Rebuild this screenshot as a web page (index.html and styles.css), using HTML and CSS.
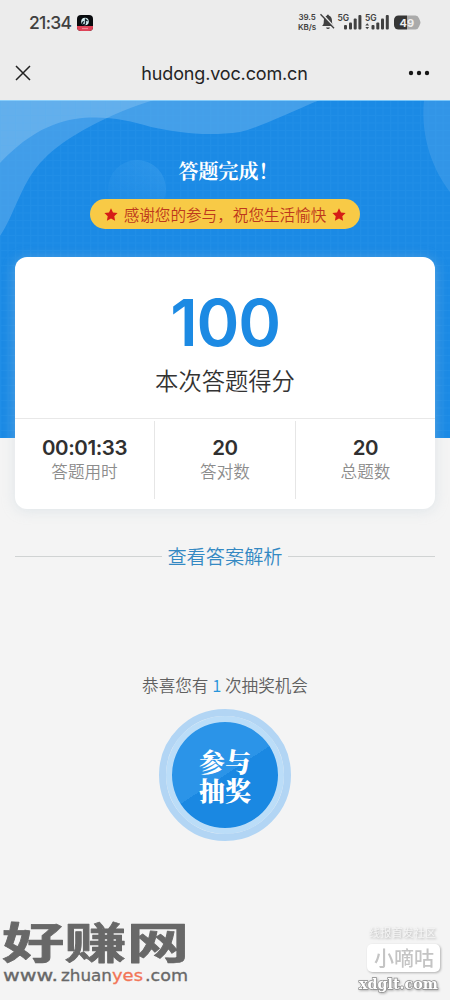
FILE: index.html
```html
<!DOCTYPE html>
<html lang="zh-CN">
<head>
<meta charset="utf-8">
<meta name="viewport" content="width=device-width, initial-scale=1">
<title>hudong.voc.com.cn</title>
<link rel="stylesheet" href="styles.css">
</head>
<body>
<div class="screen">
  <header class="top">
    <div class="status">
      <span class="clock">21:34</span>
      <svg class="app" width="16" height="16" viewBox="0 0 16 16"><rect width="16" height="16" rx="4" fill="#090b0e"/><path d="M0 11h16v1a4 4 0 0 1-4 4H4a4 4 0 0 1-4-4z" fill="#df4358"/><circle cx="8" cy="6.5" r="3.8" fill="#d3eef0"/><path d="M8.5 3.5v4.7a1.5 1.5 0 1 1-1.4-1.5M8.5 4q.6 1.7 2.2 1.8" fill="none" stroke="#17242e" stroke-width="1.3"/><path d="M5 13.5h6" stroke="#f28492" stroke-width="1.2"/></svg>
      <span class="speed">39.5<br>KB/s</span>
      <svg class="signals" width="104" height="20" viewBox="0 0 104 20">
        <path d="M3 14c1.6-1.2 1.8-2.7 1.8-5 0-3 1.4-4.8 3.2-5.4V2.8h1.8v.8c2.2.7 3.2 2.5 3.2 5.4 0 2.4.3 3.8 1.9 5zM7 15.4h4q-.5 1.5-2 1.5t-2-1.5z" fill="#404040"/><path d="M2.8 1.7 16 16" stroke="#ececec" stroke-width="1.8"/><path d="M1.5 2.3 15 16.2" stroke="#404040" stroke-width="1.4"/>
        <g class="five-g"><text x="18.5" y="8.6">5G</text><text x="46" y="8.6">5G</text></g>
        <g fill="#404040"><rect x="25" y="13" width="3" height="4.5" rx="1"/><rect x="30" y="10.5" width="3" height="7" rx="1"/><rect x="34.700" y="6.500" width="3" height="11" rx="1"/><rect x="39.400" y="3" width="3" height="14.500" rx="1"/><rect x="52.500" y="13" width="3" height="4.500" rx="1"/><rect x="57.300" y="10.500" width="3" height="7" rx="1"/><rect x="62" y="6.500" width="3" height="11" rx="1"/><rect x="66.800" y="3" width="3" height="14.500" rx="1"/><path d="m46.300 13.500 1.900-2.300 1.900 2.300zm0 1.400 1.900 2.400 1.900-2.400z"/></g>
        <path d="M79.500 3.500H88v14h-8.500a4.500 4.500 0 0 1-4.500-4.500V8a4.500 4.500 0 0 1 4.500-4.500z" fill="#353535"/><path d="M88 3.500h8.500q2.500 0 3.600 3l1.200 3q.4 1 0 2l-1.200 3q-1.100 3-3.600 3H88z" fill="#aaa"/><text class="battery" x="80.500" y="14.600">49</text>
      </svg>
    </div>
    <nav class="nav">
      <svg width="18" height="18" viewBox="0 0 18 18"><path d="M2 2 16 16M16 2 2 16" stroke="#222" stroke-width="1.5"/></svg>
      <span class="url">hudong.voc.com.cn</span>
      <svg width="22" height="6" viewBox="0 0 22 6" fill="#171717"><circle cx="3" cy="3" r="2.200"/><circle cx="11" cy="3" r="2.200"/><circle cx="19" cy="3" r="2.200"/></svg>
    </nav>
  </header>
  <section class="hero">
    <svg class="hero-art" width="450" height="338" viewBox="0 0 450 338">
      <defs>
        <pattern id="grid" width="7.500" height="7.500" patternUnits="userSpaceOnUse"><path d="M0 .5h7.500M.5 0v7.500" stroke="#4aa9f4" stroke-opacity=".11"/></pattern>
        <linearGradient id="orb" x1="0" y1=".3" x2="1" y2=".5"><stop stop-color="#46a5ef" stop-opacity=".2"/><stop offset="1" stop-color="#56adf0" stop-opacity=".4"/></linearGradient>
        <linearGradient id="fade" x1="0" x2="0" y1="60" y2="118" gradientUnits="userSpaceOnUse"><stop stop-color="#fff"/><stop offset="1" stop-color="#222"/></linearGradient>
        <mask id="orb-mask"><rect width="450" height="338" fill="url(#fade)"/></mask>
      </defs>
      <rect width="450" height="338" fill="#1b8ae5"/>
      <path d="M0 0H320C290 12 259 28 240 32C206 37 174 32 151 27C127 20 103 15 75 19C43 24 19 43 0 63Z" fill="#fff" fill-opacity=".18"/>
      <path d="M0 0H154C112 12 62 39 44 59C22 80 15 114 0 136Z" fill="#fff" fill-opacity=".17"/>
      <path d="M424 0C420 38 434 72 450 92V0Z" fill="#fff" fill-opacity=".1"/>
      <circle cx="137" cy="89" r="29" fill="url(#orb)" mask="url(#orb-mask)"/>
      <rect width="450" height="338" fill="url(#grid)"/>
      <path d="M0 .5h450" stroke="#9cdcff" stroke-opacity=".7"/>
    </svg>
    <h1 class="title">答题完成！</h1>
    <div class="ribbon">
      <svg width="14" height="13" viewBox="0 0 14 13"><path d="m7 .3 2 4.100 4.600.6-3.300 3.200.8 4.500L7 10.500l-4.100 2.200.8-4.500L.4 5 5 4.400z" fill="#d51c16"/></svg>
      <span>感谢您的参与，祝您生活愉快</span>
      <svg width="14" height="13" viewBox="0 0 14 13"><path d="m7 .3 2 4.100 4.600.6-3.300 3.200.8 4.500L7 10.500l-4.100 2.200.8-4.500L.4 5 5 4.400z" fill="#d51c16"/></svg>
    </div>
    <div class="card">
      <div class="score">100</div>
      <div class="score-label">本次答题得分</div>
      <div class="stats">
        <div class="stat"><b>00:01:33</b><span>答题用时</span></div>
        <div class="stat"><b>20</b><span>答对数</span></div>
        <div class="stat"><b>20</b><span>总题数</span></div>
      </div>
    </div>
  </section>
  <main class="below">
    <a class="review"><span>查看答案解析</span></a>
    <p class="chance">恭喜您有 <em>1</em> 次抽奖机会</p>
    <button class="draw"><span>参与<br>抽奖</span></button>
  </main>
  <footer class="marks">
    <svg class="mark-left" width="200" height="90" viewBox="0 0 200 90">
      <text class="brand" x="2" y="70.500" transform="scale(1 .7)" textLength="187" lengthAdjust="spacingAndGlyphs">好赚网</text>
      <g class="site">
        <text x="3" y="71" textLength="55" lengthAdjust="spacingAndGlyphs">www.</text>
        <text x="61" y="71" textLength="51" lengthAdjust="spacingAndGlyphs">zhuan</text>
        <text class="accent" x="112" y="71" textLength="31" lengthAdjust="spacingAndGlyphs">yes</text>
        <text x="145" y="71" textLength="43" lengthAdjust="spacingAndGlyphs">.com</text>
      </g>
    </svg>
    <svg class="mark-right" width="110" height="85" viewBox="0 0 110 85">
      <text class="mark-top" x="29" y="22" textLength="67">线报首发社区</text>
      <rect class="plate" x="27" y="29" width="73" height="28" rx="5"/>
      <text class="mark-name" x="34" y="50.500" textLength="60">小嘀咕</text>
      <text class="mark-site" x="19" y="74" textLength="79" lengthAdjust="spacingAndGlyphs">xdglt.com</text>
    </svg>
  </footer>
</div>
</body>
</html>
```
FILE: styles.css
```css
* { box-sizing: border-box; }
body { margin: 0; font-family: "Noto Sans", "Noto Sans CJK SC", sans-serif; }
.screen { width: 450px; height: 1000px; background: #f4f4f4; display: flex; flex-direction: column; overflow: hidden; }
.top { height: 100px; background: #ececec; flex: none; }
.status { height: 46px; display: flex; align-items: center; padding: 0 27px 0 29px; color: #404040; }
.clock { font: 500 17.5px/20px Inter, sans-serif; letter-spacing: -.7px; width: 48px; }
.speed { margin-left: auto; margin-right: 3px; margin-top: -3px; font: 600 8px/10px Inter, sans-serif; text-align: center; letter-spacing: -.1px; }
.signals { overflow: visible; margin-top: -2px; }
.five-g { font: 600 8.5px Inter, sans-serif; fill: #404040; }
.battery { font: 700 11px Inter, sans-serif; fill: #eee; }
.nav { height: 54px; padding: 0 20px 0 14px; display: flex; align-items: center; justify-content: space-between; }
.url { font: 400 18px/24px Inter, sans-serif; color: #242424; letter-spacing: -.15px; margin-left: 9px; margin-top: 1px; }
.hero { position: relative; flex: none; height: 338px; display: flex; flex-direction: column; align-items: center; }
.hero-art { position: absolute; inset: 0; }
.title { position: relative; margin: 56px 0 0 7px; height: 30px; font: 700 20px/30px "Noto Serif CJK SC", "Noto Sans CJK SC", serif; color: #fff; }
.ribbon { position: relative; width: 270px; height: 30px; margin-top: 13px; border-radius: 15px; background: #f8ca46; color: #bd381c; display: flex; align-items: center; justify-content: space-between; padding: 0 14px; font: 350 15.6px/30px "Noto Sans CJK SC", sans-serif; }
.card { position: relative; flex: none; width: 420px; height: 252px; margin-top: 28px; background: #fff; border-radius: 12px; box-shadow: 0 2px 13px rgba(190, 205, 216, .38); }
.score { height: 78px; margin-top: 27px; text-align: center; color: #1c8ae3; font: 600 65px/78px Inter, sans-serif; letter-spacing: -1.2px; }
.score-label { height: 36px; text-align: center; font: 350 23.3px/36px "Noto Sans CJK SC", sans-serif; color: #333; }
.stats { height: 82px; margin-top: 20px; border-top: 1px solid #e8e8e8; display: grid; grid-template-columns: 139px 141px 140px; padding-top: 2px; }
.stat { display: flex; flex-direction: column; align-items: center; height: 78px; padding-top: 13px; }
.stat + .stat { border-left: 1px solid #e6e6e6; }
.stat b { font: 600 20.5px/26px Inter, sans-serif; color: #303030; letter-spacing: -.4px; position: relative; top: 1px; }
.stat span { font: 350 16.6px/23px "Noto Sans CJK SC", sans-serif; color: #8c8c8c; }
.below { display: flex; flex-direction: column; align-items: center; padding-top: 101px; }
.review { width: 420px; height: 34px; display: flex; align-items: center; gap: 5px; color: #3489c3; font: 350 19.2px/34px "Noto Sans CJK SC", sans-serif; }
.review::before, .review::after { content: ""; flex: 1; height: 1px; background: #d0d3d3; }
.chance { margin: 99px 0 0; height: 26px; color: #606060; font: 350 16.6px/26px "Noto Sans CJK SC", sans-serif; }
.chance em { font-style: normal; color: #2695db; }
.draw { width: 132px; height: 132px; margin-top: 11px; padding: 5px; border: 7px solid #b2d5f4; border-radius: 50%; background: linear-gradient(147deg, #2b94e8 0 50%, #1a88e2 50%) content-box; box-shadow: inset 0 0 0 6px #bbddf8; color: #fff; display: grid; place-items: center; font: 900 26px/29px "Noto Serif CJK SC", "Noto Sans CJK SC", serif; }
.marks { margin-top: auto; height: 90px; display: flex; justify-content: space-between; align-items: flex-end; }
.mark-left { overflow: visible; }
.brand { font: 700 62px "Noto Sans CJK SC", sans-serif; fill: #686868; stroke: #686868; stroke-width: 1px; stroke-linejoin: round; }
.site { font: 15px "DejaVu Sans", sans-serif; fill: #686868; stroke: #686868; stroke-width: .3px; }
.site .accent { fill: #f27557; stroke: #f27557; }
.mark-right { filter: drop-shadow(1px 1px 1px rgba(0, 0, 0, .28)); }
.mark-top { font: 11px "Noto Sans CJK SC", sans-serif; fill: #f4f4f4; }
.plate { fill: #fff; }
.mark-name { font: 500 20px "Noto Sans CJK SC", sans-serif; fill: #c4c4c4; }
.mark-site { font: 700 14px "DejaVu Serif", serif; fill: #fff; stroke: #888; stroke-width: 1.3px; paint-order: stroke; }
```
